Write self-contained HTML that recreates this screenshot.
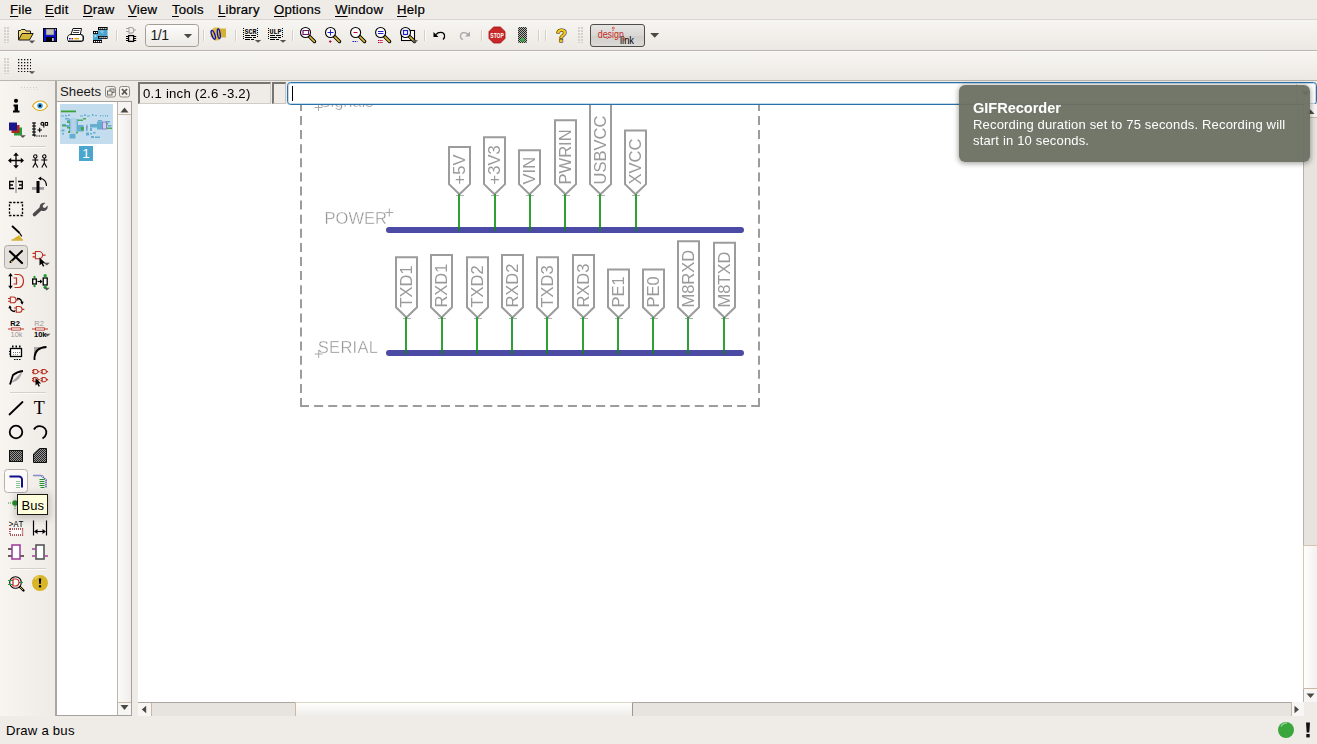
<!DOCTYPE html>
<html><head><meta charset="utf-8">
<style>
*{box-sizing:border-box;margin:0;padding:0}
html,body{width:1317px;height:744px;overflow:hidden;background:#efebe7;font-family:"Liberation Sans",sans-serif;font-size:13.5px;color:#1a1a1a}
.abs{position:absolute}
#menubar{left:0;top:0;width:1317px;height:19px;background:#efebe7}
.mi{-webkit-text-stroke:.2px #000;position:absolute;top:0.7px;height:17px;line-height:17px;font-size:13.2px;letter-spacing:.2px;white-space:nowrap;color:#000}
.mi u{text-decoration:underline;text-underline-offset:1.5px;text-decoration-thickness:1px}
#tb1{left:0;top:19px;width:1317px;height:32px;background:linear-gradient(#f7f5f1,#ece9e4);border-top:1px solid #d9d5d0;border-bottom:1px solid #b9b5af}
#tb2{left:0;top:51px;width:1317px;height:30px;background:linear-gradient(#f7f5f1,#ece9e4);border-top:1px solid #fbfaf9;border-bottom:1px solid #b9b5af}
.sep{position:absolute;top:30px;width:1px;height:11px;background:#d3cfc9;border-right:1px solid #fbfaf9;box-sizing:content-box}
.handle{position:absolute;width:6px;background-image:radial-gradient(circle at 1px 1px,#d4d0ca 0.75px,transparent 1px);background-size:3px 3px}
#canvas{left:138px;top:104px;width:1166px;height:598px;background:#fff;overflow:hidden}
#statusbar{left:0;top:716px;width:1317px;height:28px;background:#efebe7}
</style></head><body>
<!-- MENUBAR -->
<div id="menubar" class="abs">
<span class="mi" style="left:10px"><u>F</u>ile</span>
<span class="mi" style="left:45px"><u>E</u>dit</span>
<span class="mi" style="left:83px"><u>D</u>raw</span>
<span class="mi" style="left:128px"><u>V</u>iew</span>
<span class="mi" style="left:172px"><u>T</u>ools</span>
<span class="mi" style="left:218px"><u>L</u>ibrary</span>
<span class="mi" style="left:274px"><u>O</u>ptions</span>
<span class="mi" style="left:335px"><u>W</u>indow</span>
<span class="mi" style="left:397px"><u>H</u>elp</span>
</div>
<div id="tb1" class="abs"></div>
<div id="tb2" class="abs"></div>
<div class="handle" style="left:4px;top:27px;height:16px"></div>
<div class="handle" style="left:4px;top:58px;height:16px"></div>
<div class="handle" style="left:578px;top:27px;height:16px"></div>
<div class="sep" style="left:116px"></div><div class="sep" style="left:203px"></div><div class="sep" style="left:235px"></div><div class="sep" style="left:292px"></div><div class="sep" style="left:424px"></div><div class="sep" style="left:481px"></div><div class="sep" style="left:538px"></div><div class="sep" style="left:545px"></div>
<svg class="abs" style="left:0;top:19px" width="700" height="32" viewBox="0 19 700 32" shape-rendering="auto">
<!-- open folder -->
<g>
<path d="M18.5,39.5V30.5h2l1,-1h3.5l1,1.5h4.5v2" fill="#f0d878" stroke="#1a1a1a" stroke-width="1"/>
<path d="M18.5,40l3.5,-6.5h11.2l-3.8,6.5z" fill="#d8b838" stroke="#1a1a1a" stroke-width="1" stroke-linejoin="round"/>
<path d="M28.8,40.6h6.4l-3.2,2.8z" fill="#555"/>
</g>
<!-- save -->
<g>
<rect x="43.5" y="28.5" width="13" height="13" fill="#0a0ad8" stroke="#000" stroke-width="1"/>
<rect x="46" y="29" width="8" height="6" fill="#c4c0bc" stroke="#555" stroke-width=".6"/>
<rect x="46" y="37" width="8.5" height="5" fill="#000"/>
<rect x="52" y="38" width="1.8" height="3" fill="#c8c8c8"/>
<rect x="55" y="29.3" width="1" height="1" fill="#fff"/>
</g>
<!-- print -->
<g stroke="#111" stroke-width="1" fill="#fff">
<path d="M71,34.5l2,-6h8.5l-1.2,6z"/>
<path d="M67.5,38c0,-2.5 1.5,-3.5 3.5,-3.5h9.5c2,0 3,1 3,2.5v2.5c0,1 -0.6,1.5 -1.5,1.5h-13c-1,0 -1.5,-.6 -1.5,-1.5z"/>
<path d="M68,41.5h13.5l2,-1.5" fill="none"/>
<path d="M80.5,34.500c1.500,0.500 2.500,1.500 2.500,3v3" fill="none"/>
<path d="M73.500,30.500h6M73,32.500h6" stroke-width=".8"/>
</g>
<rect x="69" y="38" width="1.600" height="1.400" fill="#00c"/><rect x="71.500" y="38" width="1.600" height="1.400" fill="#c00"/><rect x="74.500" y="38" width="4.500" height="1.400" fill="#d8a800"/>
<!-- CAM film -->
<g>
<rect x="98" y="27" width="9.500" height="11.500" fill="#4aa5d0"/>
<rect x="93" y="31" width="9" height="12" fill="#4aa5d0"/>
<rect x="98" y="27" width="9.500" height="3" fill="#000"/><rect x="98" y="36" width="9.500" height="2.800" fill="#000"/>
<rect x="93" y="31" width="5" height="3" fill="#000"/><rect x="93" y="40" width="9" height="3" fill="#000"/>
<g fill="#fff"><rect x="99.200" y="28" width="1.200" height="1.200"/><rect x="101.200" y="28" width="1.200" height="1.200"/><rect x="103.200" y="28" width="1.200" height="1.200"/><rect x="105.200" y="28" width="1.200" height="1.200"/>
<rect x="99.500" y="36.800" width="1.200" height="1.200"/><rect x="101.500" y="36.800" width="1.200" height="1.200"/><rect x="103.500" y="36.800" width="1.200" height="1.200"/><rect x="105.500" y="36.800" width="1.200" height="1.200"/>
<rect x="94" y="32" width="1.200" height="1.200"/><rect x="96" y="32" width="1.200" height="1.200"/>
<rect x="94" y="41" width="1.200" height="1.200"/><rect x="96" y="41" width="1.200" height="1.200"/><rect x="98" y="41" width="1.200" height="1.200"/><rect x="100" y="41" width="1.200" height="1.200"/>
<path d="M94.500,34.500l2.500,1.500l-2.500,1.500z" fill="#bfe4f4"/><path d="M100,30.500l3,3M102,30.500l1.500,1.500" stroke="#bfe4f4" stroke-width="1" fill="none"/></g>
</g>
<!-- board/schematic switch -->
<g fill="none">
<path d="M126,28.500h3M126,31.500h3M133.500,30h2.500" stroke="#a6a6a6" stroke-width="1"/>
<path d="M129,27.500h2a2.800,2.800 0 0 1 0,5.600h-2z" stroke="#a6a6a6" stroke-width="1.100"/>
<rect x="128.600" y="35.600" width="5" height="5.800" stroke="#000" stroke-width="1.300"/>
<path d="M126,36.500h2.500M126,38.500h2.500M126,40.500h2.500M133.700,36.500h2.500M133.700,38.500h2.500M133.700,40.500h2.500" stroke="#000" stroke-width="1"/>
</g>
<!-- combobox -->
<rect x="145.500" y="24.500" width="53" height="22" rx="3" fill="url(#cbg)" stroke="#a39f98"/>
<defs><linearGradient id="cbg" x1="0" y1="0" x2="0" y2="1"><stop offset="0" stop-color="#fdfdfc"/><stop offset="1" stop-color="#ece9e5"/></linearGradient>
<linearGradient id="dlg" x1="0" y1="0" x2="0" y2="1"><stop offset="0" stop-color="#e7e6e4"/><stop offset=".5" stop-color="#d9d7d4"/><stop offset=".52" stop-color="#d0cecb"/><stop offset="1" stop-color="#dddbd8"/></linearGradient></defs>
<path d="M183.900,34h8.200l-4.100,4.200z" fill="#4a4a42"/>
<!-- library -->
<g>
<path d="M216.500,28.500h9.500v9h-9.500z" fill="#d4b232"/>
<path d="M210.500,31.500l3.500,-4h5.500v12.500l-4.500,0.800l-4.500,-4.500z" fill="#e0be3c"/>
<ellipse cx="213.300" cy="34.800" rx="1.500" ry="4.600" transform="rotate(-20 213.300 34.800)" fill="none" stroke="#1414b4" stroke-width="1.400"/>
<ellipse cx="218.800" cy="33.800" rx="1.300" ry="4.800" transform="rotate(-8 218.800 33.800)" fill="none" stroke="#1414b4" stroke-width="1.400"/>
</g>
<!-- SCR -->
<g font-family="Liberation Mono, monospace" font-weight="bold" font-size="7.500" fill="#000">
<text x="244.500" y="33.500" textLength="12" lengthAdjust="spacingAndGlyphs">SCR</text>
<text x="269.500" y="33.500" textLength="12" lengthAdjust="spacingAndGlyphs">ULP</text>
</g>
<g stroke="#000" stroke-width="1" stroke-dasharray="1 1" fill="none">
<path d="M243.500,28v12M257.500,28v10M268.500,28v12M282.500,28v10"/>
</g>
<g stroke="#000" stroke-width="1" fill="none">
<path d="M245,35.500h5M251,35.500h5M245,37.500h7M253,37.500h3M245,39.500h5M251,39.500h3"/>
<path d="M270,35.500h5M276,35.500h5M270,37.500h7M278,37.500h3M270,39.500h5M276,39.500h3"/>
</g>
<path d="M254.800,40h6.400l-3.200,2.800zM279.800,40h6.400l-3.200,2.800z" fill="#555"/>
<!-- zoom icons -->
<g id="mag">
<path d="M309.500,36.500l5,5" stroke="#000" stroke-width="3.400" stroke-linecap="round"/>
<path d="M309.800,36.800l4.500,4.500" stroke="#dcb83c" stroke-width="1.700" stroke-linecap="round"/>
<circle cx="305.500" cy="32.500" r="5" fill="#fff" fill-opacity=".9" stroke="#000" stroke-width="1.100"/>
</g>
<use href="#mag" x="25"/><use href="#mag" x="50.100"/><use href="#mag" x="75.100"/>
<g>
<rect x="401.500" y="30.500" width="13" height="10" fill="#fff" stroke="#000" stroke-width="1.100"/>
<use href="#mag" x="100" y="0"/>
</g>
<rect x="303" y="30.500" width="5.500" height="4" fill="none" stroke="#c00030" stroke-width="1"/><rect x="303" y="30.500" width="5.500" height="4" fill="none" stroke="#2020c8" stroke-width="1" stroke-dasharray="1.200 1.200"/>
<path d="M305.500,29.500v5" stroke="none"/>
<path d="M327.500,32.500h6M330.500,29.500v6" stroke="#2020c8" stroke-width="1"/><path d="M329,41.500h2.500M330.200,40.300v2.500" stroke="#c00030" stroke-width="1"/>
<path d="M353.500,32.500h4" stroke="#c00030" stroke-width="1"/><path d="M352.500,41.500h5" stroke="#2020c8" stroke-width="1" stroke-dasharray="1.500 .7"/>
<path d="M378,31.500h5.500M378,33.500h5.500" stroke="#2020c8" stroke-width="1"/><path d="M378,40.500h5M378,42.500h5" stroke="#c00030" stroke-width="1" stroke-dasharray="1.500 .7"/>
<rect x="403.500" y="30.500" width="4" height="4" fill="none" stroke="#2020c8" stroke-width="1.200"/>
<path d="M411.800,40.200h6.400l-3.200,2.800z" fill="#555"/>
<!-- undo / redo -->
<g fill="none" stroke-width="1.250">
<path d="M436,34.500c2.500,-3 7.500,-2.800 8.500,0.500c.5,2 -.3,3.500 -1.500,4.500" stroke="#000"/>
<path d="M433.500,32v5h5z" fill="#000" stroke="none"/>
<path d="M468,34.500c-2.500,-3 -7,-2.500 -7.500,1c-.3,2 1,3.500 2.500,4" stroke="#a8a8a8"/>
<path d="M470,31.500v5h-5z" fill="#a8a8a8" stroke="none"/>
</g>
<!-- stop -->
<path d="M493.600,27h6.800l4.600,4.600v6.800l-4.600,4.600h-6.800l-4.600,-4.600v-6.800z" fill="#c82828" stroke="#a01010" stroke-width=".8"/>
<text x="490.300" y="37.800" font-family="Liberation Sans, sans-serif" font-weight="bold" font-size="7" fill="#fff" textLength="13.500" lengthAdjust="spacingAndGlyphs">STOP</text>
<!-- go (traffic light hatched) -->
<defs><pattern id="chk" width="2" height="2" patternUnits="userSpaceOnUse"><rect width="1" height="1" fill="#222"/><rect x="1" y="1" width="1" height="1" fill="#222"/><rect x="1" width="1" height="1" fill="#b8b8b0"/><rect y="1" width="1" height="1" fill="#b8b8b0"/></pattern></defs>
<rect x="518" y="27" width="9" height="16" rx="1.500" fill="url(#chk)"/>
<path d="M522.500,37.500l2.500,2.500l-2.500,2.500l-2.500,-2.500z" fill="#30b040"/>
<!-- help -->
<text x="556" y="41.800" font-family="Liberation Sans, sans-serif" font-weight="bold" font-size="18" fill="#f0c820" stroke="#2a2000" stroke-width="1.100" paint-order="stroke">?</text>
<!-- designlink button -->
<rect x="590.500" y="24.500" width="54" height="22" rx="2.500" fill="url(#dlg)" stroke="#4e4d4a"/>
<text x="597.800" y="37.500" font-family="Liberation Sans, sans-serif" font-size="10" fill="#c42a22" textLength="26" lengthAdjust="spacingAndGlyphs">design</text>
<text x="620" y="44.300" font-family="Liberation Sans, sans-serif" font-size="10" fill="#000" textLength="14" lengthAdjust="spacingAndGlyphs">link</text>
<circle cx="613.300" cy="28.200" r="1" fill="none" stroke="#c42a22" stroke-width=".7"/><path d="M606,37.300l1.300,1.300l1.300,-1.300" fill="none" stroke="#c42a22" stroke-width=".8"/><path d="M624,37v4" stroke="#c42a22" stroke-width=".9"/>
<path d="M650.200,33h9l-4.500,4.800z" fill="#4a4a42"/>
</svg>
<span class="abs" style="left:150.5px;top:27px;font-size:14px;letter-spacing:-.5px;color:#1a1a1a">1/1</span>

<svg class="abs" style="left:0;top:51px" width="60" height="30" viewBox="0 51 60 30">
<defs><pattern id="gd" x="18" y="59" width="3" height="3" patternUnits="userSpaceOnUse"><rect width="1.300" height="1.300" fill="#111"/></pattern></defs>
<rect x="18" y="59" width="13.400" height="13.400" fill="url(#gd)" shape-rendering="crispEdges"/>
<path d="M28.800,71.200h6.400l-3.200,2.800z" fill="#555"/>
</svg>

<div class="abs" style="left:0;top:81px;width:55px;height:635px;background:linear-gradient(90deg,#f8f5f0,#f1ede9 70%,#efebe7)"></div>
<div class="abs" style="left:55px;top:81px;width:2px;height:635px;background:#aaa7a3"></div>

<svg class="abs" style="left:0;top:81px" width="56" height="520" viewBox="0 81 56 520">
<path d="M21,87.500h17" stroke="#cdc9c3" stroke-width="1" stroke-dasharray="1 2"/><path d="M22,89.500h17" stroke="#dedad5" stroke-width="1" stroke-dasharray="1 2"/>
<path d="M10,146.5h36" stroke="#d3cfc9" stroke-width="1"/><path d="M10,147.5h36" stroke="#fbfaf9" stroke-width="1"/>
<path d="M10,392.5h36" stroke="#d3cfc9" stroke-width="1"/><path d="M10,393.5h36" stroke="#fbfaf9" stroke-width="1"/>
<path d="M10,568.5h36" stroke="#d3cfc9" stroke-width="1"/><path d="M10,569.5h36" stroke="#fbfaf9" stroke-width="1"/>
<rect x="4.500" y="245.500" width="23" height="23" rx="3" fill="#e4e1dd" stroke="#aeaba6"/>
<rect x="4.500" y="469.500" width="23" height="23" rx="3" fill="#fbfaf9" stroke="#b5b1ab"/>
<g transform="translate(8,98)"><circle cx="8" cy="2.800" r="2.100" fill="#000"/><path d="M5.500,6.500h4.500v6h1.500v2h-6.500v-2h1.500v-4h-1z" fill="#000"/></g>
<g transform="translate(32,98)"><path d="M0.500,8c2,-3.500 5,-5 8,-5s5.500,1.500 7,5c-2,3 -4.500,4.500 -7.500,4.500s-5.500,-1.500 -7.500,-4.500z" fill="#fff" stroke="#d8a818" stroke-width="1.200"/><circle cx="8" cy="7.800" r="2.800" fill="#38a0e0"/><circle cx="8" cy="7.800" r="1.300" fill="#000"/></g>
<g transform="translate(8,121.5)"><rect x="6" y="6" width="8" height="8" fill="#2a9a3a"/><rect x="3.500" y="3.500" width="8" height="8" fill="#b02820"/><rect x="1" y="1" width="8" height="8" fill="#18188c"/><path d="M11.800,13.800h6l-3,2.600z" fill="#555"/></g>
<g transform="translate(32,121.5)"><path d="M2,1v13.500" fill="none" stroke="#000" stroke-width="1.200"/><path d="M2,14.500h13.500" stroke="#000" stroke-width="1.200" stroke-dasharray="1.300 1"/><path d="M0,1.500h4M0,4.500h4M0,7.500h4M0,10.500h4M0,13.500h4" stroke="#000" stroke-width="1"/><path d="M5.500,8.500h4.500M7.700,6.300v4.500" stroke="#000" stroke-width="1.100"/><circle cx="10.300" cy="2.300" r="1.400" fill="none" stroke="#000" stroke-width="1.100"/><path d="M11.800,2v4" stroke="#000" stroke-width="1.100"/><rect x="13.300" y="1" width="2.300" height="2.800" fill="none" stroke="#000" stroke-width="1"/></g>
<g transform="translate(8,152.5)"><path d="M8,1.500v13M1.500,8h13" stroke="#000" stroke-width="1.300"/><path d="M8,0l2.800,3.200h-5.600zM8,16l2.800,-3.200h-5.600zM0,8l3.200,-2.800v5.600zM16,8l-3.200,-2.800v5.600z" fill="#000"/></g>
<g transform="translate(32,152.5)"><g transform="translate(0.3,0)" fill="none" stroke="#000" stroke-width="1.100"><circle cx="3" cy="4" r="1.700"/><path d="M3,5.700v5M0,7.500h6M3,10.500l-2.500,4.500M3,10.500l2.500,4.500"/></g><g transform="translate(9.3,0)" fill="none" stroke="#000" stroke-width="1.100"><circle cx="3" cy="4" r="1.700"/><path d="M3,5.700v5M0,7.500h6M3,10.500l-2.500,4.500M3,10.500l2.500,4.500"/></g></g>
<g transform="translate(8,177)"><path d="M6,4.500h-4.300v7h4.300M1.700,8h3.300M10,4.500h4.300v7h-4.300M14.300,8h-3.300" fill="none" stroke="#000" stroke-width="1.300"/><path d="M8,0.500v15" stroke="#000" stroke-width="1" stroke-dasharray="1 1"/></g>
<g transform="translate(32,177)"><rect x="0" y="10" width="12" height="2.800" fill="#9a9a9a"/><rect x="4.500" y="4" width="3" height="12" fill="#000"/><path d="M8,1.500c4,0 6.500,3 6.500,7.500" fill="none" stroke="#000" stroke-width="1.100"/><path d="M6,1.600l3.200,-2v4z" fill="#000"/></g>
<g transform="translate(8,201)"><rect x="1.500" y="1.500" width="13" height="13" fill="none" stroke="#000" stroke-width="1.300" stroke-dasharray="2.200 1.500"/></g>
<g transform="translate(32,201)"><path d="M2.500,13.500l6,-5.500" stroke="#4a4a4a" stroke-width="3.600" stroke-linecap="round"/><path d="M13.300,2l-2.600,2.600l0.400,1.900l2,0.400l2.400,-2.400c0.700,2.400 -0.600,5 -3.500,5.400c-2.800,0.300 -4.700,-2 -4.300,-4.500c0.400,-2.500 3,-4.100 5.600,-3.400z" fill="#4a4a4a"/></g>
<g transform="translate(8,225)"><path d="M4,1l7.500,7" stroke="#000" stroke-width="2"/><path d="M3.200,2l7.500,7" stroke="#fff" stroke-width=".5"/><path d="M11.500,8l2.300,3.300" stroke="#000" stroke-width="1.200"/><path d="M4.500,14.500l6.500,-4.200l3.500,4.200z" fill="#d8b020"/><path d="M3.500,15h11.500" stroke="#c8a018" stroke-width="1.200"/></g>
<g transform="translate(8,249)"><path d="M2,2.500l12,11.500" stroke="#000" stroke-width="2.200" stroke-linecap="round"/><path d="M14,2l-11.500,11" stroke="#000" stroke-width="2" stroke-linecap="round"/><path d="M3,13l1.500,-1" stroke="#d8b020" stroke-width="1.200"/></g>
<g transform="translate(32,249)"><g transform="translate(0.5,2.5) scale(1.45)" fill="none" stroke="#b83020" stroke-width="1.050"><path vector-effect="non-scaling-stroke" d="M2,0h2.500a2.500,2.500 0 0 1 0,5h-2.500z"/><path vector-effect="non-scaling-stroke" d="M0,1.300h2M0,3.700h2M7,2.500h2"/></g><path d="M7.500,8.500v8l2,-1.800l1.500,3l1.300,-.7l-1.500,-2.800h2.800z" fill="#000"/><path d="M11.800,13.800h6l-3,2.600z" fill="#555"/></g>
<g transform="translate(8,273)"><path d="M2.500,2v12" stroke="#000" stroke-width="1.100"/><path d="M2.500,0l2.300,3.200h-4.600zM2.500,16l2.300,-3.200h-4.600z" fill="#000"/><path d="M6.500,1.500h4c3,0 5,3 5,6.500s-2,6.500 -5,6.500h-4" fill="none" stroke="#b83020" stroke-width="1.200"/><path d="M8.500,4.500v7" stroke="#b83020" stroke-width="1.200"/><path d="M5.500,5h3M5.500,11h3" stroke="#b83020" stroke-width="1.100"/></g>
<g transform="translate(32,273)"><rect x="0.700" y="6" width="3.600" height="5" fill="#fff" stroke="#000" stroke-width="1.300"/><rect x="11.200" y="5" width="4" height="7" fill="#fff" stroke="#000" stroke-width="1.300"/><path d="M5.500,8.500h4.500" stroke="#000" stroke-width="1.200"/><path d="M10.500,8.500l-2.500,-2v4z" fill="#000"/><circle cx="2.500" cy="4" r="1.200" fill="#20a030"/><circle cx="2.500" cy="13" r="1.200" fill="#20a030"/><circle cx="13.200" cy="2.800" r="1.700" fill="#20a030"/><circle cx="13.200" cy="14.200" r="1.700" fill="#20a030"/><path d="M11.800,14.800h6l-3,2.600z" fill="#555"/></g>
<g transform="translate(8,297)"><g transform="translate(0,0) scale(1.15)" fill="none" stroke="#b83020" stroke-width="1.050"><path vector-effect="non-scaling-stroke" d="M2,0h2.500a2.500,2.500 0 0 1 0,5h-2.500z"/><path vector-effect="non-scaling-stroke" d="M0,1.300h2M0,3.700h2M7,2.500h2"/></g><g transform="translate(6,9.5) scale(1.15)" fill="none" stroke="#b83020" stroke-width="1.050"><path vector-effect="non-scaling-stroke" d="M2,0h2.500a2.500,2.500 0 0 1 0,5h-2.500z"/><path vector-effect="non-scaling-stroke" d="M0,1.300h2M0,3.700h2M7,2.500h2"/></g><path d="M9,1.500c3,0 5,1.500 5,5" fill="none" stroke="#000" stroke-width="1.300"/><path d="M14.200,7.800l-2,-3h3.500z" fill="#000"/><path d="M7,14.500c-3,0 -5,-1.500 -5,-5" fill="none" stroke="#000" stroke-width="1.300"/><path d="M1.800,8.200l2,3h-3.500z" fill="#000"/></g>
<g transform="translate(8,321)"><text x="2.300" y="5.300" font-family="Liberation Sans, sans-serif" font-weight="bold" font-size="7.500" fill="#000">R2</text><path d="M0,8h3M13,8h3" stroke="#b83020" stroke-width="1.100"/><rect x="3.500" y="6.900" width="9" height="2.200" fill="#fff" stroke="#b83020" stroke-width=".85"/><text x="2.500" y="15.800" font-family="Liberation Sans, sans-serif" font-size="7.500" fill="#999">10k</text></g>
<g transform="translate(32,321)"><text x="2.300" y="5.300" font-family="Liberation Sans, sans-serif" font-size="7.500" fill="#999">R2</text><path d="M0,8h3M13,8h3" stroke="#b83020" stroke-width="1.100"/><rect x="3.500" y="6.900" width="9" height="2.200" fill="#fff" stroke="#b83020" stroke-width=".85"/><text x="2" y="15.800" font-family="Liberation Sans, sans-serif" font-weight="bold" font-size="7.500" fill="#000">10k</text><path d="M12.500,12.800h6l-3,2.600z" fill="#555"/></g>
<g transform="translate(8,345)"><rect x="2.500" y="3.500" width="11" height="8" fill="#fff" stroke="#000" stroke-width="1.300"/><path d="M4,0.500h1.500v2h-1.500zM7.500,0.500h1.500v2h-1.500zM11,0.500h1.500v2h-1.500z" fill="#000"/><path d="M1,6.500h2M1,9h2" stroke="#000" stroke-width="1"/><path d="M5,7.500h7" stroke="#777" stroke-width="1" stroke-dasharray="1 1"/><path d="M6,14.500h7" stroke="#000" stroke-width="1.200" stroke-dasharray="1.500 1"/><path d="M5,9.500h6" stroke="#999" stroke-width="1" stroke-dasharray="1 1"/></g>
<g transform="translate(32,345)"><path d="M2,2h8c-5,1.500 -7.500,4 -8,9z" fill="#a8a8a8"/><path d="M2.500,15v-3c0.500,-6 4,-9.500 12,-10" fill="none" stroke="#000" stroke-width="1.800"/></g>
<g transform="translate(8,369)"><path d="M2.500,14l11.500,-11c-1,6 -5,9.500 -11.500,11z" fill="#a8a8a8"/><path d="M2,15.500l3,-9.500c3,-2.500 6,-3.500 10,-4" fill="none" stroke="#000" stroke-width="1.800" stroke-linejoin="round"/></g>
<g transform="translate(32,369)"><g transform="translate(0,0.5) scale(0.85)" fill="none" stroke="#b83020" stroke-width="1.050"><path vector-effect="non-scaling-stroke" d="M2,0h2.500a2.500,2.500 0 0 1 0,5h-2.500z"/><path vector-effect="non-scaling-stroke" d="M0,1.300h2M0,3.700h2M7,2.500h2"/></g><g transform="translate(8.5,0.5) scale(0.85)" fill="none" stroke="#b83020" stroke-width="1.050"><path vector-effect="non-scaling-stroke" d="M2,0h2.500a2.500,2.500 0 0 1 0,5h-2.500z"/><path vector-effect="non-scaling-stroke" d="M0,1.300h2M0,3.700h2M7,2.500h2"/></g><g transform="translate(0,8.5) scale(0.85)" fill="none" stroke="#b83020" stroke-width="1.050"><path vector-effect="non-scaling-stroke" d="M2,0h2.500a2.500,2.500 0 0 1 0,5h-2.500z"/><path vector-effect="non-scaling-stroke" d="M0,1.300h2M0,3.700h2M7,2.500h2"/></g><g transform="translate(8.5,8.5) scale(0.85)" fill="none" stroke="#b83020" stroke-width="1.050"><path vector-effect="non-scaling-stroke" d="M2,0h2.500a2.500,2.500 0 0 1 0,5h-2.500z"/><path vector-effect="non-scaling-stroke" d="M0,1.300h2M0,3.700h2M7,2.500h2"/></g><path d="M3.500,9v7.500l1.800,-1.600l1.400,2.800l1.200,-.6l-1.400,-2.700h2.600z" fill="#000"/></g>
<g transform="translate(8,400)"><path d="M1.500,14.500l13,-12.500" stroke="#000" stroke-width="1.800" stroke-linecap="round"/></g>
<g transform="translate(32,400)"><text x="1.800" y="14.300" font-family="Liberation Serif, serif" font-size="18" fill="#000">T</text></g>
<g transform="translate(8,424)"><circle cx="8" cy="8" r="6.300" fill="none" stroke="#000" stroke-width="1.800"/></g>
<g transform="translate(32,424)"><path d="M2,5.500c2,-4 8,-4.500 11,-1c2.500,3 1.500,7.500 -2.500,10" fill="none" stroke="#000" stroke-width="1.800"/></g>
<defs><pattern id="hat" width="2" height="2" patternUnits="userSpaceOnUse"><rect width="2" height="2" fill="#222"/><rect x="1" y="0" width="1" height="1" fill="#999"/><rect x="0" y="1" width="1" height="1" fill="#999"/></pattern></defs>
<g transform="translate(8,448)"><rect x="1.500" y="2.500" width="13" height="11" fill="url(#hat)" stroke="#111" stroke-width="1"/></g>
<g transform="translate(32,448)"><path d="M1.500,14.500v-8.500l6,-5.500h7v14z" fill="url(#hat)" stroke="#111" stroke-width="1"/></g>
<g transform="translate(8,473)"><path d="M1.500,3.500h9.500a3,3 0 0 1 3,3v8" fill="none" stroke="#10108c" stroke-width="2"/><path d="M9,8v7M11,8v7" stroke="#20902a" stroke-width="1" stroke-dasharray="1 1"/></g>
<g transform="translate(32,473)"><path d="M1.500,2.500h8l4.500,4.500v8" fill="none" stroke="#2030a0" stroke-width="1.600" stroke-dasharray="1 1"/><path d="M7.500,6.500h5M7.500,8.500h5M7.500,10.500h5M7.500,12.500h5M8.500,14.500h4" stroke="#20902a" stroke-width="1"/></g>
<g transform="translate(8,497)"><circle cx="7" cy="6" r="2.800" fill="#20902a"/><path d="M0,6h4M7,9v4" stroke="#20902a" stroke-width="1" stroke-dasharray="1 1"/></g>
<g transform="translate(8,520)"><text x="0.500" y="6.500" font-family="Liberation Mono, monospace" font-size="8.500" fill="#000" textLength="15" lengthAdjust="spacingAndGlyphs">&gt;AT</text><rect x="2" y="9" width="12.500" height="6" fill="#fff" stroke="#902020" stroke-width="1.400" stroke-dasharray="1 1"/></g>
<g transform="translate(32,520)"><path d="M1.500,0.500v15M14.500,0.500v15" stroke="#000" stroke-width="1.200"/><path d="M3,11.500h10" stroke="#000" stroke-width="1.100"/><path d="M2,11.500l3.500,-2.500v5zM14,11.500l-3.500,-2.500v5z" fill="#000"/></g>
<g transform="translate(8,544)"><rect x="4" y="1" width="8" height="14" fill="#fff" stroke="#a040a0" stroke-width="1.600"/><path d="M0,5h3.500M0,12h3.500M12.500,12h3.500" stroke="#333" stroke-width="1.600"/></g>
<g transform="translate(32,544)"><rect x="4" y="1" width="8" height="14" fill="#fff" stroke="#555" stroke-width="1.600"/><path d="M0,5h3.500M0,12h3.500M12.500,12h3.500" stroke="#a040a0" stroke-width="1.600"/></g>
<g transform="translate(8,575)"><path d="M11.500,11.500l4,4" stroke="#000" stroke-width="2.400" stroke-linecap="round"/><path d="M12,12l3,3" stroke="#d8b020" stroke-width="1"/><circle cx="7.500" cy="7.500" r="5.800" fill="#fff" stroke="#000" stroke-width="1.100"/><path d="M0,5.500h5M0,9.500h5M11,7.500h4" stroke="#20a030" stroke-width="1"/><path d="M5,4h2.500a3.500,3.500 0 0 1 0,7h-2.500z" fill="none" stroke="#c02020" stroke-width="1.200"/></g>
<g transform="translate(32,575)"><circle cx="8" cy="8" r="8" fill="#d8b428"/><path d="M3,4a6.500,6.500 0 0 1 3.500,-2.500" stroke="#f0dc80" stroke-width="1.200" fill="none"/><path d="M6.800,3.500h2.400l-.5,5.500h-1.400z" fill="#000"/><rect x="6.900" y="10.200" width="2.200" height="2.200" fill="#000"/></g>
</svg>
<span class="abs" style="left:60px;top:83.5px;font-size:13.2px;letter-spacing:0px;white-space:nowrap;color:#1a1a1a">Sheets</span>
<svg class="abs" style="left:105px;top:86px" width="28" height="13" viewBox="0 0 28 13">
<rect x=".5" y=".5" width="10" height="10.5" rx="2" fill="#f3f1ee" stroke="#8a8a80"/>
<rect x="5" y="3" width="4" height="3.5" fill="none" stroke="#6a6a60" stroke-width="1"/>
<rect x="2.5" y="5" width="4.5" height="4" fill="#f3f1ee" stroke="#6a6a60" stroke-width="1"/>
<rect x="14.5" y=".5" width="10" height="10.5" rx="2" fill="#f3f1ee" stroke="#8a8a80"/>
<path d="M17,3l5,5.5M22,3l-5,5.5" stroke="#55554c" stroke-width="1.8" fill="none"/>
</svg>
<!-- list -->
<div class="abs" style="left:57px;top:101px;width:75px;height:615px;background:#fff;border:1px solid #a5a29d;border-left:none"></div>
<div class="abs" style="left:60px;top:104px;width:53px;height:40px;background:#c3dcee;overflow:hidden">
<svg width="53" height="40" viewBox="0 0 53 40">
<rect x="1" y="6.500" width="15" height="1.800" fill="#3aa43a"/>
<g fill="#4fa3c8" opacity=".8">
<path d="M1,11.500h3v1h-3zM5,11h2v1.500h-2zM8,10.500h2v1.500h-2zM20,11.500h3v1h-3zM24,10.500h2v1.500h-2zM27,11.500h3v1h-3zM32,10h1.500v2h-1.500zM35,11h2v1h-2zM40,11h1v1.500h-1zM42.500,11h1v1.500h-1zM45,11h1v1.500h-1zM47,11h1v1.500h-1z"/>
<rect x="5" y="14" width="4" height="1.500"/><rect x="7" y="16" width="3" height="2"/><rect x="2" y="20" width="4" height="1.500"/><rect x="6" y="21" width="4" height="2"/><rect x="9" y="15" width="1.500" height="14"/>
<rect x="16.500" y="15" width="1.500" height="13"/><rect x="18" y="21" width="5.500" height="6.500"/><rect x="1.500" y="25.500" width="3" height="2"/><rect x="2" y="29" width="2" height="1.500"/>
<rect x="30" y="20" width="8" height="3.500"/><rect x="37" y="17.500" width="5" height="8"/><rect x="38" y="16" width="4" height="1.500"/><rect x="30" y="24" width="2" height="3"/><rect x="26" y="22" width="1.500" height="5"/>
<rect x="9.500" y="30" width="6" height="4.500"/><rect x="26" y="28.500" width="3" height="3"/><rect x="30" y="29" width="2" height="1.500"/><rect x="33" y="28" width="2.500" height="1.500"/><rect x="31" y="32" width="3" height="2"/><rect x="35" y="32.500" width="5" height="1.500"/>
<rect x="46" y="17" width="4" height="1.500"/><rect x="47.500" y="21" width="4" height="1.500"/>
</g>
<g fill="#3aa43a" opacity=".85"><rect x="7" y="17.500" width="3" height="1.500"/><rect x="2" y="21" width="4" height="1.500"/><rect x="7" y="23" width="3" height="1.500"/><rect x="18" y="15.500" width="5" height="1.500"/><rect x="23" y="14" width="3" height="1.500"/><rect x="21" y="23" width="3" height="3.500"/><rect x="44" y="19" width="4" height="1.500"/><rect x="47" y="23.500" width="5" height="1.500"/><rect x="8" y="27" width="2" height="2"/><rect x="16" y="28" width="2" height="1.500"/></g>
<rect x="11.500" y="14.500" width="4" height="15" fill="#b6d2e6" stroke="#a2c6de" stroke-width=".5"/>
<rect x="42.500" y="18" width="4" height="7" fill="#c8d4f0" stroke="#8a78c4" stroke-width=".9"/>
<rect x="26.500" y="20.500" width="1" height="4" fill="#9a80c8"/>
</svg></div>
<div class="abs" style="left:79px;top:146px;width:14px;height:15px;background:#4ba6cf;color:#fff;font-size:13.5px;line-height:15px;text-align:center">1</div>
<!-- sheets scrollbar -->
<div class="abs" style="left:117px;top:102px;width:14px;height:613px;background:linear-gradient(90deg,#fbfaf9,#f0eeeb);border-left:1px solid #c2b6a6"></div>
<div class="abs" style="left:117px;top:102px;width:14px;height:13px;background:#f6f5f3;border-left:1px solid #b5b1ab;border-bottom:1px solid #c8b8a4"></div>
<div class="abs" style="left:117px;top:702px;width:14px;height:13px;background:#f6f5f3;border-left:1px solid #b5b1ab;border-top:1px solid #c8b8a4"></div>
<svg class="abs" style="left:117px;top:102px" width="14" height="612"><path d="M3.5,10.5L7.5,5.5L11.5,10.5Z" fill="#4a4a42"/><path d="M3.5,603L7.5,608L11.5,603Z" fill="#4a4a42"/></svg>

<div id="canvas" class="abs">
<svg class="abs sc" style="left:0;top:0;will-change:transform" width="1166" height="598" viewBox="138 104 1166 598" font-family="Liberation Sans, sans-serif"><style>svg.sc text{stroke:#fff;stroke-width:.42px;paint-order:fill stroke;fill:#8d8d8d}svg.sc text.rt{stroke:none;fill:#9a9a9a}</style>
<path d="M301,407V100M759,407V100M300,406H760" fill="none" stroke="#9c9c9c" stroke-width="2" stroke-dasharray="9 5.1"/>
<text x="319.5" y="107.1" font-size="16.5">Signals</text>
<path d="M314.5,107.5h8M318.5,104v7" stroke="#a8a8a8" stroke-width="1" fill="none"/>
<path d="M389,230H741M389,353H741" stroke="#4b4ba5" stroke-width="6" stroke-linecap="round" fill="none"/>
<polygon points="449.0,147.1 470.0,147.1 470.0,184.10000000000002 459.5,194.3 449.0,184.10000000000002" fill="none" stroke="#9c9c9c" stroke-width="2" stroke-linejoin="miter"/><path d="M456.0,195.5h8" stroke="#b0b0b0" stroke-width="1" fill="none"/><text class="rt" transform="translate(465.1,184.40000000000003) rotate(-90)" font-size="16.5">+5V</text>
<path d="M459,194V231" stroke="#2ea035" stroke-width="2"/><path d="M459,227V231" stroke="#1f7d2a" stroke-width="2"/>
<polygon points="484.0,137.3 505.0,137.3 505.0,184.10000000000002 494.5,194.3 484.0,184.10000000000002" fill="none" stroke="#9c9c9c" stroke-width="2" stroke-linejoin="miter"/><path d="M491.0,195.5h8" stroke="#b0b0b0" stroke-width="1" fill="none"/><text class="rt" transform="translate(500.1,184.40000000000003) rotate(-90)" font-size="16.5">+3V3</text>
<path d="M495,194V231" stroke="#2ea035" stroke-width="2"/><path d="M495,227V231" stroke="#1f7d2a" stroke-width="2"/>
<polygon points="519.0,150.3 540.0,150.3 540.0,184.10000000000002 529.5,194.3 519.0,184.10000000000002" fill="none" stroke="#9c9c9c" stroke-width="2" stroke-linejoin="miter"/><path d="M526.0,195.5h8" stroke="#b0b0b0" stroke-width="1" fill="none"/><text class="rt" transform="translate(535.1,184.40000000000003) rotate(-90)" font-size="16.5">VIN</text>
<path d="M530,194V231" stroke="#2ea035" stroke-width="2"/><path d="M530,227V231" stroke="#1f7d2a" stroke-width="2"/>
<polygon points="555.0,120.2 576.0,120.2 576.0,184.10000000000002 565.5,194.3 555.0,184.10000000000002" fill="none" stroke="#9c9c9c" stroke-width="2" stroke-linejoin="miter"/><path d="M562.0,195.5h8" stroke="#b0b0b0" stroke-width="1" fill="none"/><text class="rt" transform="translate(571.1,184.40000000000003) rotate(-90)" font-size="16.5">PWRIN</text>
<path d="M565,194V231" stroke="#2ea035" stroke-width="2"/><path d="M565,227V231" stroke="#1f7d2a" stroke-width="2"/>
<polygon points="590.0,101.0 611.0,101.0 611.0,184.10000000000002 600.5,194.3 590.0,184.10000000000002" fill="none" stroke="#9c9c9c" stroke-width="2" stroke-linejoin="miter"/><path d="M597.0,195.5h8" stroke="#b0b0b0" stroke-width="1" fill="none"/><text class="rt" transform="translate(606.1,184.40000000000003) rotate(-90)" font-size="16.5">USBVCC</text>
<path d="M600,194V231" stroke="#2ea035" stroke-width="2"/><path d="M600,227V231" stroke="#1f7d2a" stroke-width="2"/>
<polygon points="625.0,130.4 646.0,130.4 646.0,184.10000000000002 635.5,194.3 625.0,184.10000000000002" fill="none" stroke="#9c9c9c" stroke-width="2" stroke-linejoin="miter"/><path d="M632.0,195.5h8" stroke="#b0b0b0" stroke-width="1" fill="none"/><text class="rt" transform="translate(641.1,184.40000000000003) rotate(-90)" font-size="16.5">XVCC</text>
<path d="M636,194V231" stroke="#2ea035" stroke-width="2"/><path d="M636,227V231" stroke="#1f7d2a" stroke-width="2"/>
<polygon points="396.0,257.3 417.0,257.3 417.0,307.3 406.5,317.5 396.0,307.3" fill="none" stroke="#9c9c9c" stroke-width="2" stroke-linejoin="miter"/><path d="M403.0,318.5h8" stroke="#b0b0b0" stroke-width="1" fill="none"/><text class="rt" transform="translate(412.1,307.6) rotate(-90)" font-size="16.5">TXD1</text>
<path d="M406,317V354" stroke="#2ea035" stroke-width="2"/><path d="M406,350V354" stroke="#1f7d2a" stroke-width="2"/>
<polygon points="431.0,255.1 452.0,255.1 452.0,307.3 441.5,317.5 431.0,307.3" fill="none" stroke="#9c9c9c" stroke-width="2" stroke-linejoin="miter"/><path d="M438.0,318.5h8" stroke="#b0b0b0" stroke-width="1" fill="none"/><text class="rt" transform="translate(447.1,307.6) rotate(-90)" font-size="16.5">RXD1</text>
<path d="M442,317V354" stroke="#2ea035" stroke-width="2"/><path d="M442,350V354" stroke="#1f7d2a" stroke-width="2"/>
<polygon points="467.0,257.3 488.0,257.3 488.0,307.3 477.5,317.5 467.0,307.3" fill="none" stroke="#9c9c9c" stroke-width="2" stroke-linejoin="miter"/><path d="M474.0,318.5h8" stroke="#b0b0b0" stroke-width="1" fill="none"/><text class="rt" transform="translate(483.1,307.6) rotate(-90)" font-size="16.5">TXD2</text>
<path d="M477,317V354" stroke="#2ea035" stroke-width="2"/><path d="M477,350V354" stroke="#1f7d2a" stroke-width="2"/>
<polygon points="502.0,255.1 523.0,255.1 523.0,307.3 512.5,317.5 502.0,307.3" fill="none" stroke="#9c9c9c" stroke-width="2" stroke-linejoin="miter"/><path d="M509.0,318.5h8" stroke="#b0b0b0" stroke-width="1" fill="none"/><text class="rt" transform="translate(518.1,307.6) rotate(-90)" font-size="16.5">RXD2</text>
<path d="M512,317V354" stroke="#2ea035" stroke-width="2"/><path d="M512,350V354" stroke="#1f7d2a" stroke-width="2"/>
<polygon points="537.0,257.3 558.0,257.3 558.0,307.3 547.5,317.5 537.0,307.3" fill="none" stroke="#9c9c9c" stroke-width="2" stroke-linejoin="miter"/><path d="M544.0,318.5h8" stroke="#b0b0b0" stroke-width="1" fill="none"/><text class="rt" transform="translate(553.1,307.6) rotate(-90)" font-size="16.5">TXD3</text>
<path d="M547,317V354" stroke="#2ea035" stroke-width="2"/><path d="M547,350V354" stroke="#1f7d2a" stroke-width="2"/>
<polygon points="573.0,255.1 594.0,255.1 594.0,307.3 583.5,317.5 573.0,307.3" fill="none" stroke="#9c9c9c" stroke-width="2" stroke-linejoin="miter"/><path d="M580.0,318.5h8" stroke="#b0b0b0" stroke-width="1" fill="none"/><text class="rt" transform="translate(589.1,307.6) rotate(-90)" font-size="16.5">RXD3</text>
<path d="M583,317V354" stroke="#2ea035" stroke-width="2"/><path d="M583,350V354" stroke="#1f7d2a" stroke-width="2"/>
<polygon points="608.0,269.6 629.0,269.6 629.0,307.3 618.5,317.5 608.0,307.3" fill="none" stroke="#9c9c9c" stroke-width="2" stroke-linejoin="miter"/><path d="M615.0,318.5h8" stroke="#b0b0b0" stroke-width="1" fill="none"/><text class="rt" transform="translate(624.1,307.6) rotate(-90)" font-size="16.5">PE1</text>
<path d="M618,317V354" stroke="#2ea035" stroke-width="2"/><path d="M618,350V354" stroke="#1f7d2a" stroke-width="2"/>
<polygon points="643.0,269.6 664.0,269.6 664.0,307.3 653.5,317.5 643.0,307.3" fill="none" stroke="#9c9c9c" stroke-width="2" stroke-linejoin="miter"/><path d="M650.0,318.5h8" stroke="#b0b0b0" stroke-width="1" fill="none"/><text class="rt" transform="translate(659.1,307.6) rotate(-90)" font-size="16.5">PE0</text>
<path d="M653,317V354" stroke="#2ea035" stroke-width="2"/><path d="M653,350V354" stroke="#1f7d2a" stroke-width="2"/>
<polygon points="678.0,241.3 699.0,241.3 699.0,307.3 688.5,317.5 678.0,307.3" fill="none" stroke="#9c9c9c" stroke-width="2" stroke-linejoin="miter"/><path d="M685.0,318.5h8" stroke="#b0b0b0" stroke-width="1" fill="none"/><text class="rt" transform="translate(694.1,307.6) rotate(-90)" font-size="16.5">M8RXD</text>
<path d="M688,317V354" stroke="#2ea035" stroke-width="2"/><path d="M688,350V354" stroke="#1f7d2a" stroke-width="2"/>
<polygon points="714.0,242.7 735.0,242.7 735.0,307.3 724.5,317.5 714.0,307.3" fill="none" stroke="#9c9c9c" stroke-width="2" stroke-linejoin="miter"/><path d="M721.0,318.5h8" stroke="#b0b0b0" stroke-width="1" fill="none"/><text class="rt" transform="translate(730.1,307.6) rotate(-90)" font-size="16.5">M8TXD</text>
<path d="M724,317V354" stroke="#2ea035" stroke-width="2"/><path d="M724,350V354" stroke="#1f7d2a" stroke-width="2"/>
<text x="324.6" y="223.9" font-size="16.5">POWER</text>
<path d="M385.3,212.5h8M389.3,208.5v8" stroke="#a8a8a8" stroke-width="1" fill="none"/>
<text x="317.8" y="353" font-size="16.5" letter-spacing=".3">SERIAL</text>
<path d="M314.7,354h8M318.7,350v8" stroke="#a8a8a8" stroke-width="1" fill="none"/>
</svg>
</div>
<!-- coord box -->
<div class="abs" style="left:138px;top:82px;width:133px;height:22px;border-top:2px solid #777572;border-left:2px solid #777572;border-right:1px solid #d0ccc7;border-bottom:1px solid #d0ccc7;background:#efebe7"></div>
<span class="abs" style="left:143px;top:86px;font-size:13.2px;letter-spacing:.22px;white-space:nowrap;color:#000">0.1 inch (2.6 -3.2)</span>
<div class="abs" style="left:272px;top:82px;width:14px;height:22px;border-top:2px solid #777572;border-left:2px solid #777572;border-right:1px solid #c8c4bf;border-bottom:1px solid #c8c4bf;background:#efebe7"></div>
<!-- command input -->
<div class="abs" style="left:287px;top:82px;width:1030px;height:23px;background:#fff;border:1px solid #2c72aa;border-radius:3.500px;box-shadow:inset 0 0 0 1px rgba(44,114,170,.28)"></div>
<div class="abs" style="left:292px;top:86px;width:1.300px;height:15px;background:#000"></div>

<!-- H scrollbar -->
<div class="abs" style="left:138px;top:702px;width:1166px;height:14px;background:#e7e3df;border-top:1px solid #aaa7a3"></div>
<div class="abs" style="left:138px;top:702px;width:13px;height:14px;background:#f7f6f4;border-top:1px solid #aaa7a3"></div>
<div class="abs" style="left:151px;top:703px;width:1px;height:13px;background:#c8b8a4"></div>
<div class="abs" style="left:295px;top:702px;width:338px;height:14px;background:linear-gradient(#fdfdfc,#efedea);border-top:1px solid #d8d6c4;border-right:1px solid #9a9894;border-left:1px solid #c8b8a4"></div>
<div class="abs" style="left:1291px;top:702px;width:13px;height:14px;background:#f7f6f4;border-left:1px solid #c8b8a4"></div>
<svg class="abs" style="left:138px;top:702px" width="1166" height="14"><path d="M8.200,3.700L3.800,7.500L8.200,11.300Z" fill="#4a4a42"/><path d="M1156.500,3.700L1161,7.500L1156.500,11.300Z" fill="#4a4a42"/></svg>
<!-- V scrollbar -->
<div class="abs" style="left:1303px;top:104px;width:14px;height:598px;background:#e7e3df;border-left:1px solid #b4b2ae"></div>
<div class="abs" style="left:1304px;top:104px;width:13px;height:14px;background:#f7f6f4;border-bottom:1px solid #c8b8a4"></div>
<div class="abs" style="left:1303px;top:545px;width:14px;height:144px;background:linear-gradient(90deg,#fefefd,#f2f1ee);border-top:1px solid #d6c4ae;border-left:1px solid #d2cab2"></div>
<div class="abs" style="left:1304px;top:688px;width:13px;height:14px;background:#f7f6f4;border-top:1px solid #c8b8a4"></div>
<svg class="abs" style="left:1304px;top:104px" width="13" height="598"><path d="M2.500,10L6.500,5.500L10.500,10Z" fill="#4a4a42"/><path d="M2.500,589.500L6.500,594L10.500,589.500Z" fill="#4a4a42"/></svg>
<div class="abs" style="left:1304px;top:702px;width:13px;height:14px;background:#efebe7"></div>

<div id="statusbar" class="abs"><span class="abs" style="left:6px;top:6.5px;font-size:13.2px;letter-spacing:.2px;white-space:nowrap;color:#000">Draw a bus</span>
<svg class="abs" style="left:1276px;top:4px" width="40" height="20" viewBox="0 0 40 20">
<circle cx="10" cy="10" r="8" fill="#3aa63c"/>
<path d="M5,6.5a6.5,6.5 0 0 1 6,-3.5" stroke="#8fd08f" stroke-width="1.3" fill="none"/>
<path d="M30,2.5h4l-.7,10h-2.6z" fill="#111"/><rect x="30.3" y="14" width="3.4" height="3.4" fill="#111"/>
</svg>

</div>
<svg class="abs" style="left:1296px;top:83px" width="20" height="21"><path d="M.5,0v21" stroke="#d8d4cf"/><path d="M5.500,8.500h8l-4,4z" fill="#4a4a42"/></svg>
<div class="abs" style="left:959px;top:85px;width:351px;height:77px;background:rgba(107,112,98,.95);border-radius:6px;box-shadow:0 1px 5px 1px rgba(40,40,35,.38)"></div>
<span class="abs" style="left:973px;top:100px;font-size:14.600px;font-weight:bold;color:#fff;white-space:nowrap;letter-spacing:-.05px">GIFRecorder</span>
<span class="abs" style="left:973px;top:116.700px;font-size:13px;line-height:16px;color:#fff;white-space:nowrap;letter-spacing:.17px">Recording duration set to 75 seconds. Recording will<br>start in 10 seconds.</span>

<div class="abs" style="left:17px;top:494px;width:31px;height:21px;background:#ffffdc;border:1px solid #1a1a1a;box-shadow:0 2px 7px 2px rgba(40,35,30,.22)"></div>
<span class="abs" style="left:21.500px;top:497.500px;font-size:13px;letter-spacing:0;color:#000;white-space:nowrap">Bus</span>

</body></html>
